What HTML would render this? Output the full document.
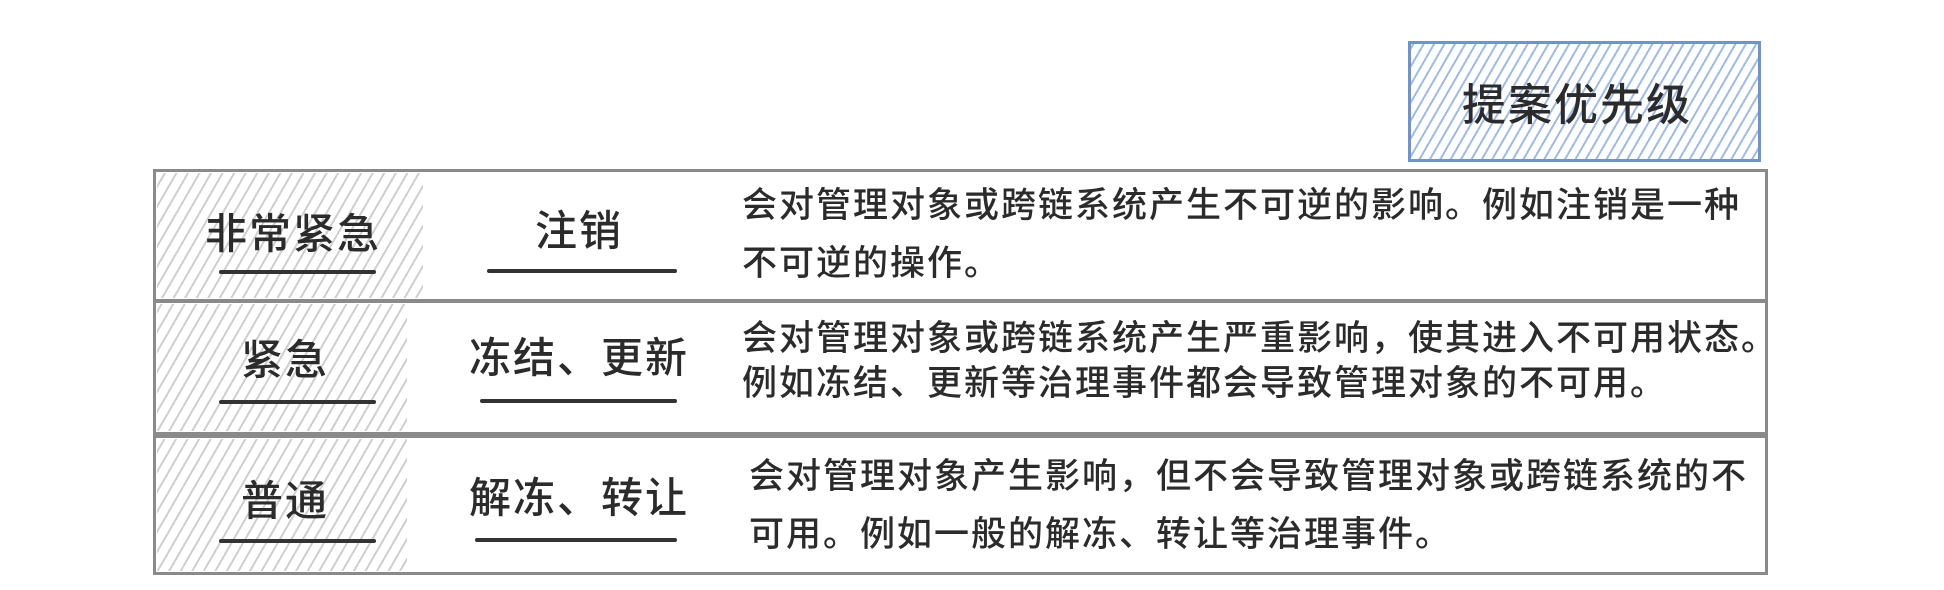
<!DOCTYPE html>
<html><head><meta charset="utf-8"><style>
body{margin:0;width:1944px;height:590px;background:#fff;position:relative;overflow:hidden;font-family:"Liberation Sans","Noto Sans CJK SC",sans-serif;color:#2b2b2b;font-weight:500}
.a{position:absolute}
.box{position:absolute;border:3px solid #8a8a8a;box-sizing:border-box;background:#fff}
.hat{position:absolute;background:repeating-linear-gradient(-60deg,#fff 0 5px,#cfcfcf 5px 7px,#fff 7px 10px)}
.lab{position:absolute;font-size:42px;transform:translate(-50%,-50%);white-space:nowrap;letter-spacing:2px}
.ul{position:absolute;height:4px;background:#333;border-radius:2px}
.d{position:absolute;font-size:35px;letter-spacing:2px;white-space:nowrap;line-height:1}
</style></head><body>
<div class="a" style="left:1408px;top:41px;width:353px;height:121px;border:3px solid #6c93d4;box-sizing:border-box;background:repeating-linear-gradient(-60deg,#fff 0 4px,#9dbcec 4px 6px,#fff 6px 9px)"></div>
<div class="lab" style="left:1577px;top:101px;font-size:44px">提案优先级</div>

<div class="box" style="left:153px;top:169px;width:1615px;height:133px"></div>
<div class="box" style="left:153px;top:300px;width:1615px;height:135px"></div>
<div class="box" style="left:153px;top:435px;width:1615px;height:140px"></div>
<div class="hat" style="left:157px;top:173px;width:266px;height:125px"></div>
<div class="hat" style="left:157px;top:304px;width:250px;height:127px"></div>
<div class="hat" style="left:157px;top:439px;width:250px;height:132px"></div>

<div class="lab" style="left:293px;top:231px">非常紧急</div>
<div class="ul" style="left:219px;top:270px;width:157px"></div>
<div class="lab" style="left:579px;top:228px">注销</div>
<div class="ul" style="left:487px;top:269px;width:190px"></div>
<div class="d" style="left:742px;top:188px">会对管理对象或跨链系统产生不可逆的影响。例如注销是一种</div>
<div class="d" style="left:742px;top:246px">不可逆的操作。</div>

<div class="lab" style="left:285px;top:357px">紧急</div>
<div class="ul" style="left:219px;top:400px;width:157px"></div>
<div class="lab" style="left:579px;top:355px">冻结、更新</div>
<div class="ul" style="left:480px;top:399px;width:197px"></div>
<div class="d" style="left:742px;top:321px">会对管理对象或跨链系统产生严重影响，使其进入不可用状态。</div>
<div class="d" style="left:742px;top:366px">例如冻结、更新等治理事件都会导致管理对象的不可用。</div>

<div class="lab" style="left:285px;top:498px">普通</div>
<div class="ul" style="left:219px;top:539px;width:157px"></div>
<div class="lab" style="left:579px;top:495px">解冻、转让</div>
<div class="ul" style="left:475px;top:538px;width:202px"></div>
<div class="d" style="left:749px;top:459px">会对管理对象产生影响，但不会导致管理对象或跨链系统的不</div>
<div class="d" style="left:749px;top:517px">可用。例如一般的解冻、转让等治理事件。</div>
</body></html>
